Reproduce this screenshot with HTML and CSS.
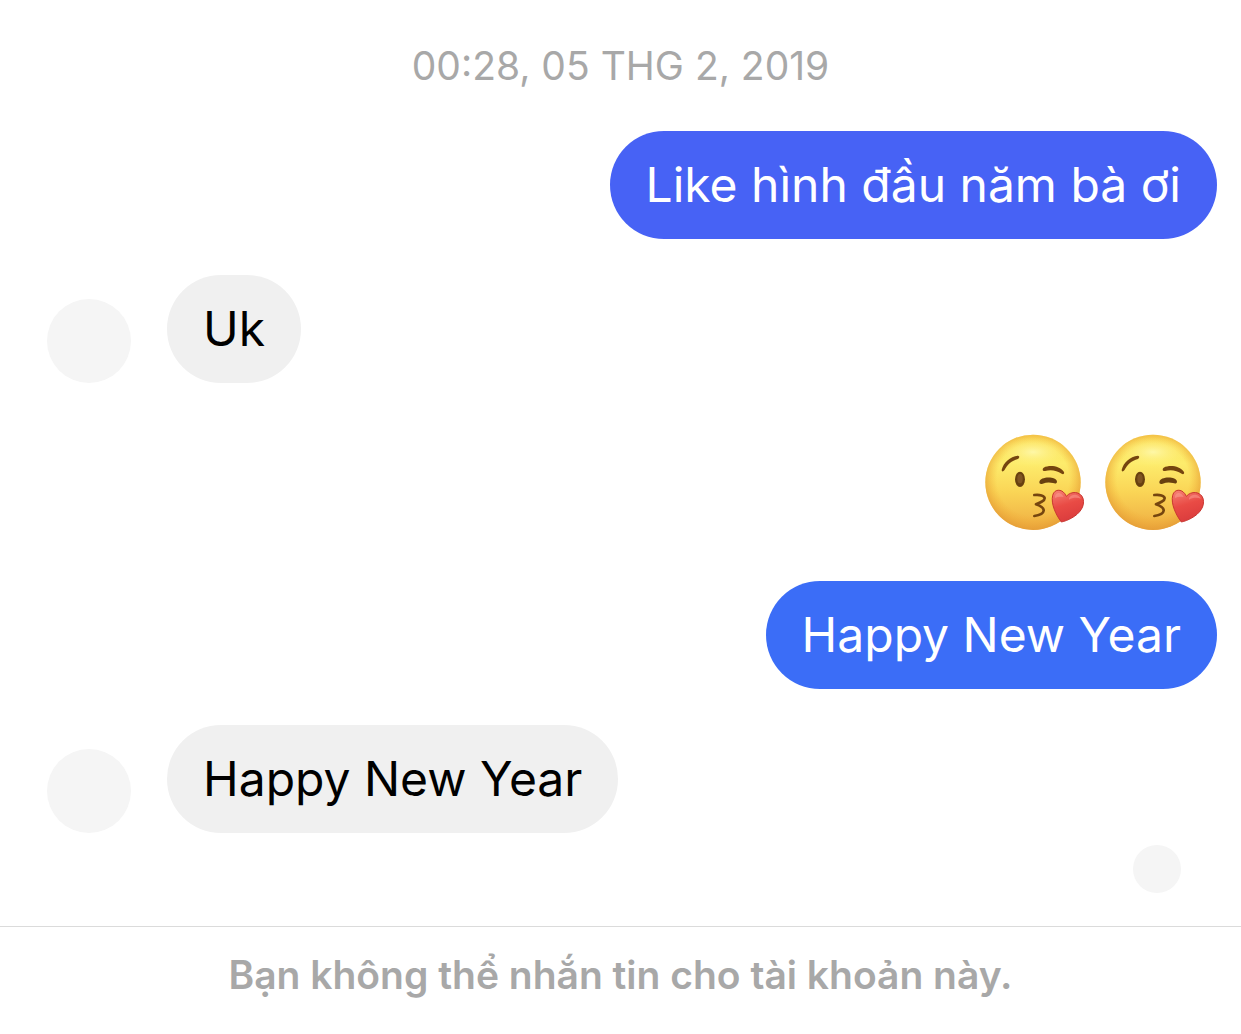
FILE: index.html
```html
<!DOCTYPE html>
<html lang="vi">
<head>
    <meta charset="UTF-8">
    <meta name="viewport" content="width=device-width, initial-scale=1.0">
    <title>Chat</title>
    <link rel="stylesheet" href="styles.css">
</head>
<body>
    <main class="chat">
        <time class="chat-date" datetime="2019-02-05T00:28">00:28, 05 THG 2, 2019</time>

        <div class="message sent">
            <p class="bubble bubble-violet">Like hình đầu năm bà ơi</p>
        </div>

        <div class="message received">
            <span class="avatar"></span>
            <p class="bubble">Uk</p>
        </div>

        <div class="message sent emoji-row">
            <svg class="emoji" viewBox="30 30 315 315" role="img" aria-label="Kiss">
                <defs>
                    <linearGradient id="face" x1="0" y1="0" x2="0" y2="1">
                        <stop offset="0" stop-color="#fbdc58"/>
                        <stop offset="0.3" stop-color="#fdec6c"/>
                        <stop offset="0.6" stop-color="#fad556"/>
                        <stop offset="1" stop-color="#eeac42"/>
                    </linearGradient>
                    <radialGradient id="edge" cx="0.5" cy="0.47" r="0.54">
                        <stop offset="0.7" stop-color="#f3ae35" stop-opacity="0"/>
                        <stop offset="1" stop-color="#e39a35" stop-opacity="0.85"/>
                    </radialGradient>
                    <radialGradient id="shine">
                        <stop offset="0" stop-color="#fffcb8" stop-opacity="0.8"/>
                        <stop offset="1" stop-color="#fff27a" stop-opacity="0"/>
                    </radialGradient>
                    <linearGradient id="heart" x1="0.3" y1="0" x2="0.6" y2="1">
                        <stop offset="0" stop-color="#f47b70"/>
                        <stop offset="0.45" stop-color="#e94b45"/>
                        <stop offset="1" stop-color="#d93a3c"/>
                    </linearGradient>
                </defs>
                <g id="kiss">
                    <circle cx="189" cy="187" r="143" fill="url(#face)"/>
                    <circle cx="189" cy="187" r="143" fill="url(#edge)"/>
                    <ellipse cx="189" cy="96" rx="105" ry="46" fill="url(#shine)"/>
                    <path d="M95 150C100 128 120 109 144 107C149 108 149 113 144 117C124 122 113 133 103 151C99 156 95 155 95 150Z" fill="#75450f"/>
                    <path d="M221 143C240 134 269 138 282 156C284 162 279 164 275 161C260 151 243 148 225 153C218 154 216 147 221 143Z" fill="#75450f"/>
                    <ellipse cx="150" cy="178" rx="15" ry="23" fill="#68400f"/>
                    <ellipse cx="150" cy="176" rx="8" ry="14" fill="#805522"/>
                    <path d="M208 186C210 169 259 168 261 185C261 191 255 191 249 189C238 186 228 187 218 191C211 193 208 191 208 186Z" fill="#68400f"/>
                    <path d="M193 225C209 223 224 227 224 235C224 243 211 248 198 253C212 258 222 263 221 272C220 281 207 286 193 288" fill="none" stroke="#75450f" stroke-width="8" stroke-linecap="round" stroke-linejoin="round"/>
                    <path d="M274 306C258 285 242 252 248 226C253 205 279 205 289 229C303 212 332 214 339 235C346 259 329 281 305 294C294 300 284 304 274 306Z" fill="url(#heart)" stroke="#c93630" stroke-width="3"/>
                    <path d="M255 229C259 215 274 216 281 231C272 229 263 230 255 234ZM297 234C306 221 325 221 333 236C320 232 307 233 297 239Z" fill="#ffb1a4" opacity="0.4"/>
                </g>
            </svg>
            <svg class="emoji" viewBox="30 30 315 315" role="img" aria-label="Kiss">
                <use href="#kiss"/>
            </svg>
        </div>

        <div class="message sent">
            <p class="bubble bubble-blue">Happy New Year</p>
        </div>

        <div class="message received">
            <span class="avatar"></span>
            <p class="bubble">Happy New Year</p>
        </div>

        <span class="seen"></span>
    </main>

    <footer class="notice">Bạn không thể nhắn tin cho tài khoản này.</footer>
</body>
</html>
```

FILE: styles.css
```css
* {
    box-sizing: border-box;
}
body {
    margin: 0;
    min-height: 100vh;
    display: flex;
    flex-direction: column;
    background-color: #fff;
    color: #000;
    font-family: Inter, "Noto Sans", sans-serif;
}
.chat {
    flex: 1;
    display: flex;
    flex-direction: column;
    gap: 36px;
    padding: 36px 24px 0 47px;
}
.chat-date {
    margin: 0 -24px 0 -47px;
    color: #a8a8a8;
    font-size: 39px;
    line-height: 59px;
    text-align: center;
}
.message {
    display: flex;
    align-items: flex-end;
    gap: 36px;
}
.sent {
    justify-content: flex-end;
}
.bubble {
    margin: 0;
    padding: 24px 36px;
    border-radius: 54px;
    background-color: #f0f0f0;
    font-size: 48px;
    line-height: 60px;
}
.bubble-violet {
    background-color: #4762f5;
    color: #fff;
}
.bubble-blue {
    background-color: #3b6df7;
    color: #fff;
}
.avatar {
    width: 84px;
    height: 84px;
    flex-shrink: 0;
    border-radius: 50%;
    background-color: #f5f5f5;
}
.emoji-row {
    gap: 15px;
    padding: 11px 12px 10px;
}
.emoji {
    width: 105px;
    height: 105px;
}
.seen {
    align-self: flex-end;
    width: 48px;
    height: 48px;
    margin: -24px 36px 0 0;
    border-radius: 50%;
    background-color: #f5f5f5;
}
.notice {
    padding: 18px 24px 29px;
    border-top: 1px solid #dbdbdb;
    color: #a8a8a8;
    font-size: 39px;
    font-weight: 600;
    line-height: 60px;
    text-align: center;
}
```
